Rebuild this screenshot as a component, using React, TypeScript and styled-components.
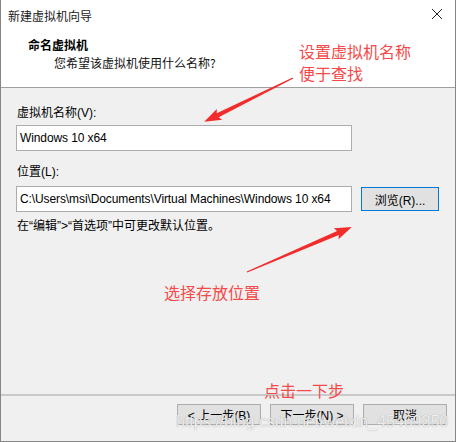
import styled, { createGlobalStyle } from 'styled-components'

const GlobalStyle = createGlobalStyle`
  html, body {
    margin: 0;
    padding: 0;
    background: #ffffff;
  }
  body {
    font-family: 'Liberation Sans', 'Noto Sans CJK SC', sans-serif;
    font-size: 12px;
    color: #000;
  }
`

type ArrowProps = { x: number, y: number, length: number, angle: number }

// thin tapered arrow drawn along +x, then rotated into place
function Arrow ({ x, y, length, angle }: ArrowProps) {
  const L = length
  const pts = [
    [0, -0.6], [L - 15, -2.2], [L - 17, -6], [L, 0],
    [L - 17, 6], [L - 15, 2.2], [0, 0.6]
  ].map(p => p.join(',')).join(' ')
  return (
    <g transform={`translate(${x} ${y}) rotate(${angle})`}>
      <polygon points={pts} fill='#f22b2b' />
    </g>
  )
}

export default function App () {
  return (
    <>
      <GlobalStyle />
      <Window>
        <TitleBar>
          <Title>新建虚拟机向导</Title>
          <CloseIcon width='12' height='12' viewBox='0 0 12 12'>
            <path d='M1 1 L11 11 M11 1 L1 11' stroke='#222' strokeWidth='1' />
          </CloseIcon>
        </TitleBar>
        <Header>
          <Heading>命名虚拟机</Heading>
          <SubHeading>您希望该虚拟机使用什么名称?</SubHeading>
        </Header>
        <Body>
          <Label>虚拟机名称(V):</Label>
          <Field>Windows 10 x64</Field>
          <Label spaced>位置(L):</Label>
          <FieldRow>
            <Field>C:\Users\msi\Documents\Virtual Machines\Windows 10 x64</Field>
            <BrowseButton>浏览(R)...</BrowseButton>
          </FieldRow>
          <Hint>在“编辑”&gt;“首选项”中可更改默认位置。</Hint>
        </Body>
        <Footer>
          <DialogButton>&lt; 上一步(B)</DialogButton>
          <DialogButton>下一步(N) &gt;</DialogButton>
          <DialogButton>取消</DialogButton>
        </Footer>

        <Note top={40} left={298}>设置虚拟机名称<br />便于查找</Note>
        <Note top={281} left={163}>选择存放位置</Note>
        <Note top={379} left={263}>点击一下步</Note>
        <Arrows width='456' height='442' viewBox='0 0 456 442'>
          <Arrow x={292} y={78} length={99} angle={153.7} />
          <Arrow x={246} y={272} length={114} angle={-23.2} />
        </Arrows>
        <Watermark>https://blog.csdn.net/weixin_45469350</Watermark>
      </Window>
    </>
  )
}

const Window = styled.div`
  position: relative;
  width: 456px;
  height: 442px;
  box-sizing: border-box;
  border: 1px solid #868686;
  border-top: none;
  background: #f0f0f0;
  display: flex;
  flex-direction: column;
  overflow: hidden;
`

const TitleBar = styled.div`
  height: 30px;
  background: #fff;
  display: flex;
  align-items: center;
  justify-content: space-between;
  padding: 0 12px 0 7px;
`

const Title = styled.span`
  font-family: 'Noto Sans CJK SC', sans-serif;
  font-size: 12px;
  color: #1a1a1a;
  margin-top: 1px;
`

const CloseIcon = styled.svg`
  display: block;
  margin-top: -2px;
`

const Header = styled.div`
  height: 57px;
  box-sizing: content-box;
  background: #fff;
  border-bottom: 1px solid #a0a0a0;
  padding-left: 27px;
  display: flex;
  flex-direction: column;
`

const Heading = styled.div`
  font-family: 'Noto Sans CJK SC', sans-serif;
  font-weight: 700;
  font-size: 12px;
  line-height: 16px;
  margin-top: 7px;
`

const SubHeading = styled.div`
  font-family: 'Noto Sans CJK SC', sans-serif;
  font-size: 12px;
  line-height: 16px;
  margin: 2px 0 0 26px;
  color: #111;
`

const Body = styled.div`
  flex: 1;
  padding: 17px 15px 0 15px;
  display: flex;
  flex-direction: column;
`

const Label = styled.div<{ spaced?: boolean }>`
  font-size: 12px;
  line-height: 16px;
  padding-left: 1px;
  margin-top: ${p => (p.spaced ? '13px' : '0')};
`

const FieldRow = styled.div`
  display: flex;
  align-items: center;
  gap: 9px;
  margin-top: 6px;
`

const Field = styled.div`
  width: 336px;
  height: 26px;
  box-sizing: border-box;
  background: #fff;
  border: 1px solid #acacac;
  padding: 0 3px;
  display: flex;
  align-items: center;
  font-size: 12px;
  letter-spacing: -0.1px;
  white-space: nowrap;
  ${Label} + & {
    margin-top: 4px;
  }
`

const BrowseButton = styled.div`
  width: 78px;
  height: 24px;
  box-sizing: border-box;
  background: #e1e1e1;
  border: 1px solid #0078d7;
  display: flex;
  align-items: center;
  justify-content: center;
  font-size: 12px;
`

const Hint = styled.div`
  font-size: 12px;
  line-height: 16px;
  margin-top: 6px;
  padding-left: 1px;
`

const Footer = styled.div`
  height: 37px;
  border-top: 2px solid #c9c9c9;
  display: flex;
  justify-content: flex-end;
  align-items: flex-start;
  gap: 9px;
  padding: 8px 8px 0 0;
`

const DialogButton = styled.div`
  width: 84px;
  height: 21px;
  box-sizing: border-box;
  background: #e1e1e1;
  border: 1px solid #adadad;
  display: flex;
  align-items: center;
  justify-content: center;
  font-size: 12px;
`

const Note = styled.div<{ top: number, left: number }>`
  position: absolute;
  top: ${p => p.top}px;
  left: ${p => p.left}px;
  font-family: 'Noto Sans CJK SC', sans-serif;
  font-size: 16px;
  line-height: 22px;
  color: #f44a4a;
`

const Arrows = styled.svg`
  position: absolute;
  top: 0;
  left: 0;
  pointer-events: none;
`

const Watermark = styled.div`
  position: absolute;
  left: 175px;
  top: 410px;
  font-family: 'Liberation Sans', sans-serif;
  font-size: 16px;
  line-height: 24px;
  color: rgba(255, 255, 255, 0.85);
  text-shadow: 0 0 1px rgba(110, 110, 110, 0.7);
  white-space: nowrap;
  pointer-events: none;
`
